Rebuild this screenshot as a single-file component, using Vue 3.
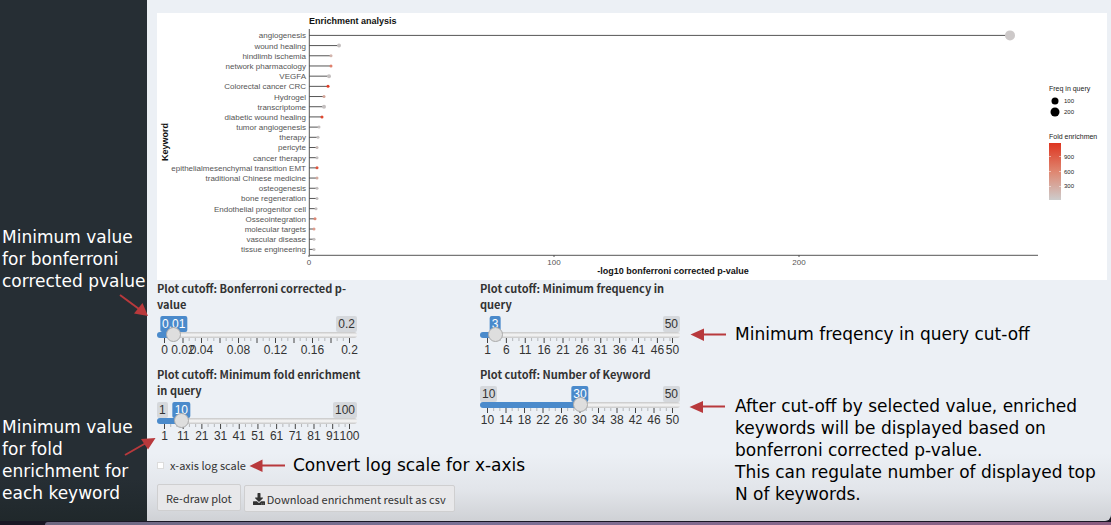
<script setup>
import { reactive, ref } from 'vue'

const rows = [
  { name: 'angiogenesis', x: 853, r: 5, color: '#cdc9c9' },
  { name: 'wound healing', x: 182, r: 2, color: '#c4c0c0' },
  { name: 'hindlimb ischemia', x: 174, r: 1.5, color: '#d3b5ad' },
  { name: 'network pharmacology', x: 174, r: 1.5, color: '#e0806c' },
  { name: 'VEGFA', x: 172, r: 2, color: '#c4c0c0' },
  { name: 'Colorectal cancer CRC', x: 171, r: 1.5, color: '#e03c24' },
  { name: 'Hydrogel', x: 167, r: 1.5, color: '#d3a598' },
  { name: 'transcriptome', x: 167, r: 2, color: '#c4c0c0' },
  { name: 'diabetic wound healing', x: 165, r: 1.5, color: '#e0482f' },
  { name: 'tumor angiogenesis', x: 162, r: 1.5, color: '#c4c0c0' },
  { name: 'therapy', x: 161, r: 1.5, color: '#c4c0c0' },
  { name: 'pericyte', x: 160, r: 1.5, color: '#c8bab6' },
  { name: 'cancer therapy', x: 160, r: 1.5, color: '#c4c0c0' },
  { name: 'epithelialmesenchymal transition EMT', x: 160, r: 1.5, color: '#e0553d' },
  { name: 'traditional Chinese medicine', x: 160, r: 1.5, color: '#d3aba0' },
  { name: 'osteogenesis', x: 160, r: 1.5, color: '#c4c0c0' },
  { name: 'bone regeneration', x: 160, r: 1.5, color: '#c4c0c0' },
  { name: 'Endothelial progenitor cell', x: 159, r: 1.5, color: '#c4c0c0' },
  { name: 'Osseointegration', x: 158, r: 1.5, color: '#dd8875' },
  { name: 'molecular targets', x: 157, r: 1.5, color: '#dd9d8e' },
  { name: 'vascular disease', x: 157, r: 1.5, color: '#c4c0c0' },
  { name: 'tissue engineering', x: 157, r: 1.5, color: '#c4c0c0' },
]
const rowY = (i) => 22.4 + i * 10.19

const xTicks = [
  { v: 0, x: 152 },
  { v: 100, x: 397 },
  { v: 200, x: 642 },
]

const series = (from, step, to) => {
  const out = []
  for (let v = from; v <= to; v += step) out.push(v)
  if (out[out.length - 1] !== to) out.push(to)
  return out
}

const sliders = reactive([
  { id: 'pvalue', label: 'Plot cutoff: Bonferroni corrected p-\nvalue', min: 0, max: 0.2, step: 0.01, value: 0.01, major: 0.02, labels: [0, 0.02, 0.04, 0.08, 0.12, 0.16, 0.2], showMin: false },
  { id: 'freq', label: 'Plot cutoff: Minimum frequency in\nquery', min: 1, max: 50, step: 1, value: 3, major: 5, labels: series(1, 5, 50), showMin: false },
  { id: 'fold', label: 'Plot cutoff: Minimum fold enrichment\nin query', min: 1, max: 100, step: 1, value: 10, major: 10, labels: series(1, 10, 100), showMin: true },
  { id: 'number', label: 'Plot cutoff: Number of Keyword', min: 10, max: 50, step: 1, value: 30, major: 4, labels: series(10, 4, 50), showMin: true },
])
const columns = [
  [sliders[0], sliders[2]],
  [sliders[1], sliders[3]],
]

const ratio = (s, v) => (v - s.min) / (s.max - s.min)
const tickX = (s, v) => 7.5 + 185 * ratio(s, v)
const thumbLeft = (s) => `calc(${ratio(s, s.value)} * (100% - 15px) + 7.5px)`
const ticks = (s) => {
  const out = []
  const unit = s.major / 3
  const count = Math.floor((s.max - s.min) / unit + 0.001)
  for (let k = 0; k <= count; k++) out.push({ x: tickX(s, s.min + k * unit), big: k % 3 === 0 })
  if (count % 3 !== 0) out.push({ x: tickX(s, s.max), big: true })
  return out
}

const logScale = ref(false)
const sideNotes = [
  ['Minimum value', 'for bonferroni', 'corrected pvalue'],
  ['Minimum value', 'for fold', 'enrichment for', 'each keyword'],
]
const rightNotes = [
  ['Minimum freqency in query cut-off'],
  [
    'After cut-off by selected value, enriched',
    'keywords will be displayed based on',
    'bonferroni corrected p-value.',
    'This can regulate number of displayed top',
    'N of keywords.',
  ],
]
</script>

<template>
  <div class="page">
    <div class="window">
      <aside class="sidebar">
        <p v-for="(note, i) in sideNotes" :key="i" class="note">
          <span v-for="line in note" :key="line">{{ line }}</span>
        </p>
      </aside>

      <main class="content">
        <section class="plot">
          <svg viewBox="0 0 950 267" role="img" aria-label="Enrichment analysis">
            <defs>
              <linearGradient id="fold-scale" x1="0" y1="0" x2="0" y2="1">
                <stop offset="0" stop-color="#de3520" />
                <stop offset="0.5" stop-color="#df8670" />
                <stop offset="1" stop-color="#cdcccc" />
              </linearGradient>
            </defs>
            <text class="title" x="152" y="11">Enrichment analysis</text>
            <g v-for="(row, i) in rows" :key="row.name">
              <text class="row-label" x="149" :y="rowY(i) + 3">{{ row.name }}</text>
              <line class="stem" x1="152" :x2="row.x" :y1="rowY(i)" :y2="rowY(i)" />
              <circle :cx="row.x" :cy="rowY(i)" :r="row.r" :fill="row.color" />
            </g>
            <path class="axis" d="M152.3 16V242.3H881" />
            <g v-for="t in xTicks" :key="t.v">
              <line class="axis" :x1="t.x" :x2="t.x" y1="242" y2="244" />
              <text class="tick-label" :x="t.x" y="252">{{ t.v }}</text>
            </g>
            <text class="axis-title" x="516" y="261">-log10 bonferroni corrected p-value</text>
            <text class="axis-title" transform="translate(11 129) rotate(-90)">Keyword</text>

            <text class="legend-title" x="892" y="78">Freq in query</text>
            <circle cx="898" cy="88" r="3.5" />
            <circle cx="898" cy="99" r="4.5" />
            <text class="legend-label" x="907" y="90">100</text>
            <text class="legend-label" x="907" y="101">200</text>
            <text class="legend-title" x="892" y="126">Fold enrichmen</text>
            <rect x="892" y="130" width="12" height="57" fill="url(#fold-scale)" />
            <path class="legend-tick" d="M892 143.500h2M902 143.500h2M892 158.500h2M902 158.500h2M892 173.500h2M902 173.500h2" />
            <text class="legend-label" x="907" y="146">900</text>
            <text class="legend-label" x="907" y="161">600</text>
            <text class="legend-label" x="907" y="175">300</text>
          </svg>
        </section>

        <div class="lower">
          <form class="controls" @submit.prevent>
            <div class="slider-grid">
              <div v-for="(col, c) in columns" :key="c" class="column">
                <div v-for="s in col" :key="s.id" class="slider">
                  <label :for="s.id">{{ s.label }}</label>
                  <div class="values">
                    <span v-if="s.showMin" class="badge">{{ s.min }}</span>
                    <span class="badge last">{{ s.max }}</span>
                    <output :for="s.id" class="bubble" :style="{ left: thumbLeft(s) }">{{ s.value }}</output>
                  </div>
                  <input
                    :id="s.id"
                    v-model.number="s.value"
                    type="range"
                    :min="s.min"
                    :max="s.max"
                    :step="s.step"
                    :style="{ '--fill': thumbLeft(s) }"
                  />
                  <svg class="scale" viewBox="0 0 200 20" aria-hidden="true">
                    <line
                      v-for="t in ticks(s)"
                      :key="t.x"
                      :class="{ big: t.big }"
                      :x1="t.x"
                      :x2="t.x"
                      y1="0"
                      :y2="t.big ? 5 : 3"
                    />
                    <text v-for="v in s.labels" :key="v" :x="tickX(s, v)" y="16">{{ v }}</text>
                  </svg>
                </div>
              </div>
            </div>

            <div class="check-row">
              <label class="check">
                <input v-model="logScale" type="checkbox" />
                x-axis log scale
              </label>
              <span class="note">Convert log scale for x-axis</span>
            </div>

            <div class="buttons">
              <button type="button">Re-draw plot</button>
              <button type="button" class="download">
                <svg viewBox="0 0 512 512" aria-hidden="true">
                  <path
                    d="M216 0h80c13 0 24 11 24 24v168h88c18 0 27 21 14 34L270 378c-7 7-20 7-28 0L90 226c-13-13-4-34 14-34h88V24c0-13 11-24 24-24zm296 376v112c0 13-11 24-24 24H24c-13 0-24-11-24-24V376c0-13 11-24 24-24h147l49 49c20 20 52 20 72 0l49-49h147c13 0 24 11 24 24zM388 464a20 20 0 1 0-40 0 20 20 0 0 0 40 0zm64 0a20 20 0 1 0-40 0 20 20 0 0 0 40 0z"
                  />
                </svg>
                Download enrichment result as csv
              </button>
            </div>
          </form>

          <div class="explain">
            <p v-for="(note, i) in rightNotes" :key="i" class="note">
              <span v-for="line in note" :key="line">{{ line }}</span>
            </p>
          </div>
        </div>
      </main>
    </div>
    <div class="desktop"><div class="dock"></div></div>

    <svg class="arrows" width="1111" height="525" viewBox="0 0 1111 525" aria-hidden="true">
      <path class="shaft" d="M120 295L139 309M125 455L146 443M285 465.500H261M726 334.500H703M725 406.500H702" />
      <path
        class="head"
        d="M148 316L134 313.500L142.500 303ZM155.500 438L141 439L148 449.500ZM249.500 466L262.500 459.500V472ZM690.500 334.500L704 328.500V341ZM689.500 407L703 401V413Z"
      />
    </svg>
  </div>
</template>

<style>
body {
  margin: 0;
}
</style>

<style scoped>
.page {
  position: relative;
  display: flex;
  flex-direction: column;
  min-height: 100vh;
  overflow: hidden;
  background: #191724;
  font-family: "Noto Sans CJK JP", "Noto Sans", sans-serif;
  color: #333;
}

.window {
  flex: 1;
  display: flex;
  border-radius: 0 0 6px 0;
  overflow: hidden;
}

.sidebar {
  flex: 0 0 147px;
  box-sizing: border-box;
  display: flex;
  flex-direction: column;
  gap: 124px;
  padding: 226px 0 0 2px;
  background: linear-gradient(#262e34 92%, #20282b);
  color: #fff;
}

.note {
  margin: 0;
  font: 17px/22px "DejaVu Sans", Verdana, sans-serif;
  white-space: nowrap;
}

.note span {
  display: block;
}

.content {
  flex: 1;
  min-width: 0;
  padding: 13px 4px 0 10px;
  background: linear-gradient(#ecf0f5 0, #ecf0f5 87%, #e2e5ea 94%, #cfd1d5 100%);
}

.plot {
  background: #fff;
}

.plot svg {
  display: block;
  width: 100%;
  font-family: "Liberation Sans", Arial, sans-serif;
}

.title {
  font-size: 9px;
  font-weight: bold;
  fill: #111;
}

.row-label {
  font-size: 8px;
  text-anchor: end;
  fill: #555;
}

.tick-label {
  font-size: 8px;
  text-anchor: middle;
  fill: #555;
}

.axis-title {
  font-size: 9px;
  font-weight: bold;
  text-anchor: middle;
  fill: #111;
}

.legend-title {
  font-size: 7px;
  fill: #222;
}

.legend-label {
  font-size: 6px;
  fill: #222;
}

.stem,
.axis {
  fill: none;
  stroke: #555;
  stroke-width: 1;
}

.legend-tick {
  stroke: #fff;
  stroke-opacity: 0.5;
}

.lower {
  display: grid;
  grid-template-columns: 578fr 372fr;
}

.slider-grid {
  display: grid;
  grid-template-columns: 323fr 255fr;
}

.column {
  display: flex;
  flex-direction: column;
  gap: 8px;
}

.slider {
  width: 200px;
}

.slider label {
  display: block;
  font-size: 11px;
  line-height: 16px;
  font-weight: bold;
  white-space: pre;
}

.values {
  position: relative;
  display: flex;
  height: 16px;
  margin-top: 4px;
  font: 12px/16px "Liberation Sans", Arial, sans-serif;
}

.badge,
.bubble {
  padding: 0 2px;
  border-radius: 2px;
}

.badge {
  background: #d5d8dc;
}

.last {
  margin-left: auto;
}

.bubble {
  position: absolute;
  top: 0;
  transform: translateX(-50%);
  background: #4a8acb;
  color: #fff;
}

.slider input {
  appearance: none;
  display: block;
  position: relative;
  width: 100%;
  height: 6px;
  margin: 0;
  background: none;
}

.slider input::-webkit-slider-runnable-track {
  box-sizing: border-box;
  height: 6px;
  border-radius: 3px;
  background:
    linear-gradient(#4a8acb, #4a8acb) 0 0 / var(--fill) 100% no-repeat,
    linear-gradient(#cfcfcf 1px, #f0f0f0 2px, #f0f0f0 4px, #cfcfcf 5px);
}

.slider input::-webkit-slider-thumb {
  appearance: none;
  box-sizing: border-box;
  width: 15px;
  height: 15px;
  margin-top: -5px;
  border: 1px solid #aaa;
  border-radius: 50%;
  background: #dedede;
}

.scale {
  display: block;
  width: 100%;
  overflow: visible;
  font: 12px "Liberation Sans", Arial, sans-serif;
}

.scale line {
  stroke: #b4b6b9;
}

.scale .big {
  stroke: #444;
}

.scale text {
  text-anchor: middle;
  fill: #333;
}

.check-row {
  display: flex;
  align-items: center;
  gap: 47px;
  margin-top: 10px;
  color: #000;
}

.check {
  display: flex;
  align-items: center;
  gap: 6px;
  font-size: 11px;
  line-height: 22px;
  color: #333;
}

.check input {
  appearance: none;
  box-sizing: border-box;
  width: 7px;
  height: 7px;
  margin: 0;
  border: 1px solid #dcdcdc;
  background: #fff;
}

.check input:checked {
  background: #428bca;
}

.buttons {
  display: flex;
  gap: 3px;
  margin-top: 8px;
}

button {
  height: 27px;
  padding: 0 8px;
  border: 1px solid #cfcfd0;
  border-radius: 2px;
  background: #e8e8ea;
  font-family: inherit;
  font-size: 11px;
  line-height: 16px;
  color: #333;
  white-space: nowrap;
}

.download {
  display: flex;
  align-items: center;
  gap: 2px;
  margin-top: 1px;
}

.download svg {
  width: 12px;
  height: 12px;
  fill: #333;
}

.explain {
  display: flex;
  flex-direction: column;
  gap: 50px;
  padding-top: 43px;
  color: #000;
}

.desktop {
  box-sizing: border-box;
  height: 4px;
  padding: 1px 0 0 45px;
  background: #191724;
}

.dock {
  height: 3px;
  border-radius: 8px 0 0 0;
  background: linear-gradient(90deg, #6d6780, #7a7196 40%, #87668a 75%, #8a5c80);
}

.arrows {
  position: absolute;
  top: 0;
  left: 0;
  pointer-events: none;
}

.shaft {
  fill: none;
  stroke: #b8393c;
  stroke-width: 2;
}

.head {
  fill: #b8393c;
}
</style>
